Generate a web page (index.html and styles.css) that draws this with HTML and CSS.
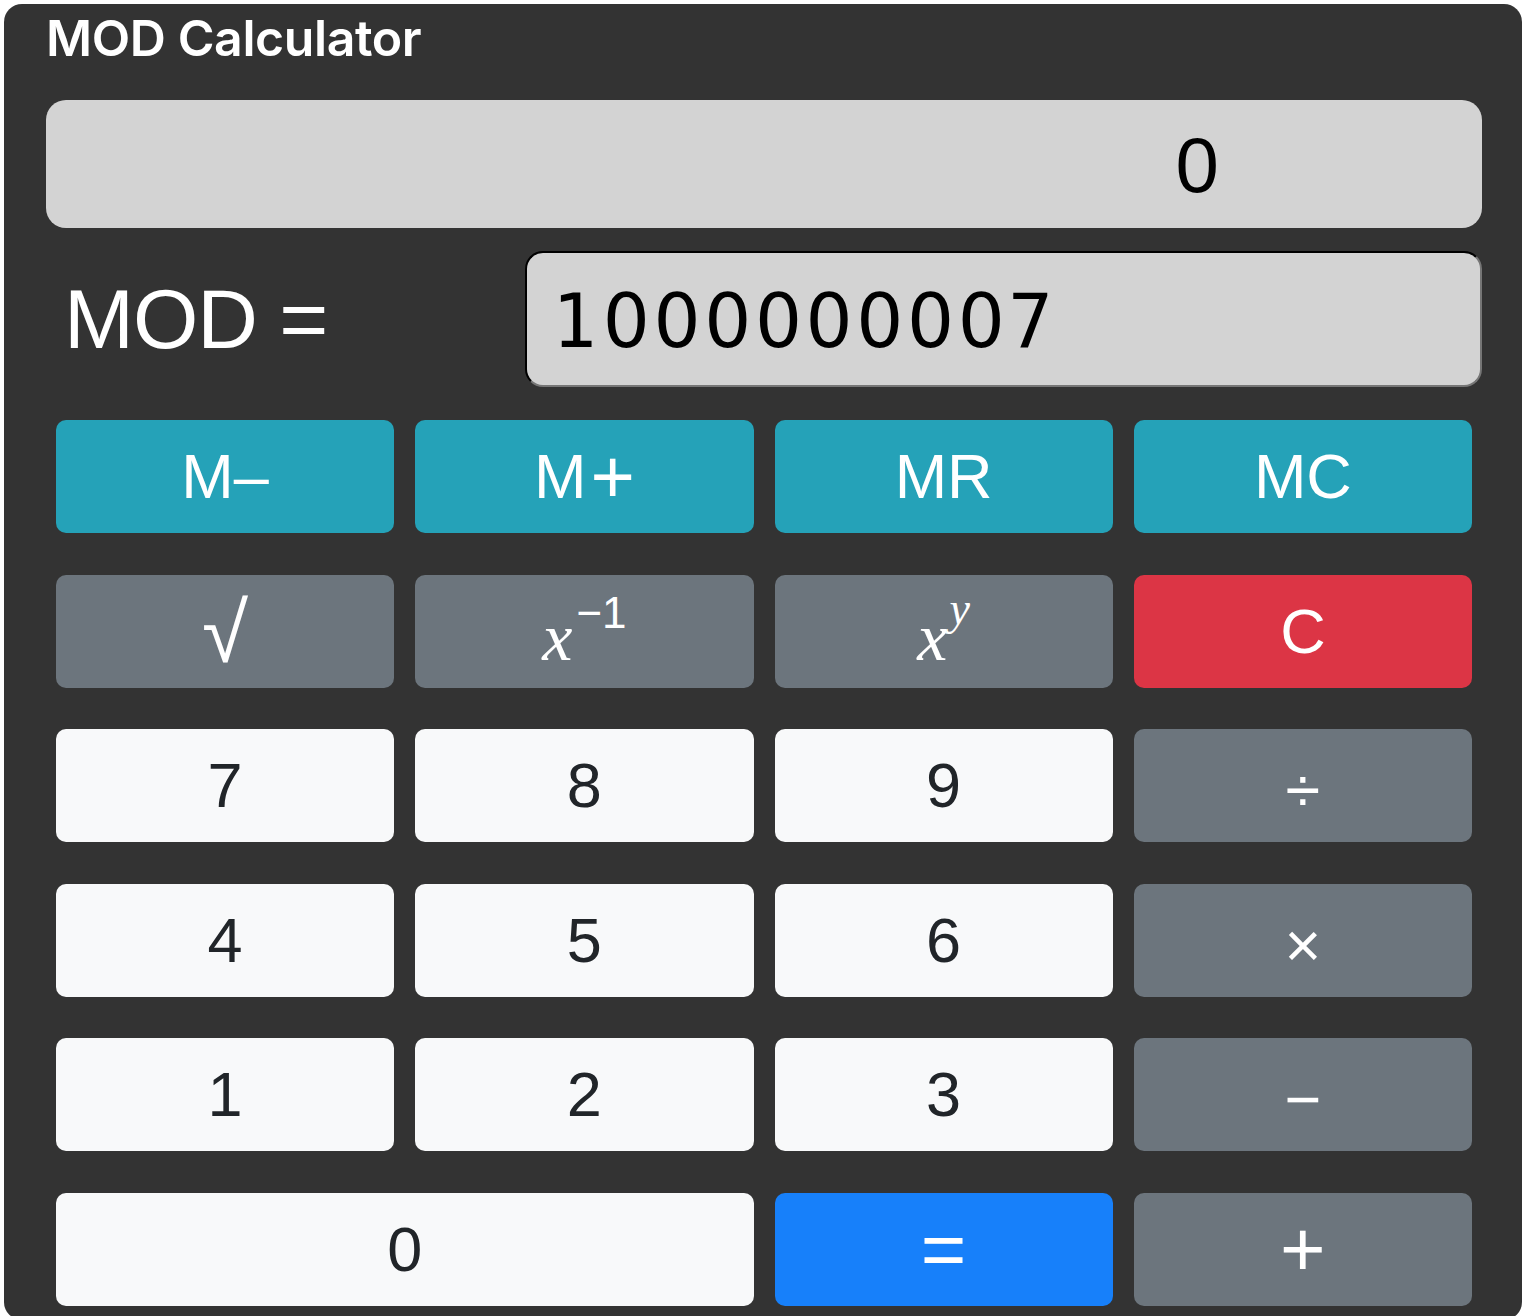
FILE: index.html
```html
<!DOCTYPE html>
<html lang="en">
<head>
<meta charset="utf-8">
<title>MOD Calculator</title>
<link rel="stylesheet" href="styles.css">
</head>
<body>
<div class="calc">
  <h1 class="title">MOD Calculator</h1>
  <div class="display">0</div>
  <div class="mod-row">
    <div class="mod-label">MOD =</div>
    <div class="mod-input">1<span class="zeros">00000000</span>7</div>
  </div>
  <div class="keys">
    <button class="key info">M&#8211;</button>
    <button class="key info">M<span class="bigplus">+</span></button>
    <button class="key info">MR</button>
    <button class="key info">MC</button>

    <button class="key sec"><span class="sqrt">&#8730;</span></button>
    <button class="key sec"><span class="mx">x</span><span class="sup">&#8722;1</span></button>
    <button class="key sec"><span class="mx">x</span><span class="sup mxs">y</span></button>
    <button class="key danger">C</button>

    <button class="key light">7</button>
    <button class="key light">8</button>
    <button class="key light">9</button>
    <button class="key sec"><span class="op">&#247;</span></button>

    <button class="key light">4</button>
    <button class="key light">5</button>
    <button class="key light">6</button>
    <button class="key sec"><span class="op">&#215;</span></button>

    <button class="key light">1</button>
    <button class="key light">2</button>
    <button class="key light">3</button>
    <button class="key sec"><span class="op">&#8722;</span></button>

    <button class="key light wide">0</button>
    <button class="key primary"><span class="eq">=</span></button>
    <button class="key sec plus">+</button>
  </div>
</div>
</body>
</html>
```

FILE: styles.css
```css
* {
  box-sizing: border-box;
}

html, body {
  margin: 0;
  padding: 0;
  background: #ffffff;
}

body {
  padding: 4px 0 0 4px;
  font-family: "Liberation Sans", Arial, sans-serif;
}

.calc {
  width: 1518px;
  height: 1316px;
  background: #333333;
  border-radius: 18px;
  padding: 0 40px 0 42px;
  display: flex;
  flex-direction: column;
}

.title {
  margin: 0;
  height: 96px;
  padding-top: 4px;
  font-family: Inter, "Liberation Sans", sans-serif;
  font-weight: 600;
  font-size: 50px;
  line-height: 60px;
  letter-spacing: -0.4px;
  color: #ffffff;
}

.display {
  height: 128px;
  background: #d3d3d3;
  border-radius: 20px;
  text-align: right;
  padding-right: 263px;
  font-size: 78px;
  line-height: 130px;
  color: #000000;
}

.mod-row {
  margin-top: 23px;
  height: 136px;
  display: flex;
  align-items: center;
}

.mod-label {
  width: 479px;
  padding-left: 18px;
  font-size: 84px;
  letter-spacing: -1px;
  color: #ffffff;
}

.mod-input {
  width: 957px;
  height: 136px;
  background: #d3d3d3;
  border: 2px inset #767676;
  border-top-color: #1e1e1e;
  border-left-color: #1e1e1e;
  border-radius: 18px;
  padding-left: 25px;
  padding-top: 4px;
  font-family: "DejaVu Sans Mono", monospace;
  font-size: 74px;
  letter-spacing: 6.3px;
  line-height: 128px;
  color: #000000;
  white-space: nowrap;
}

.zeros {
  font-family: "DejaVu Sans", sans-serif;
  letter-spacing: 3.6px;
}

.keys {
  margin: 33px 10px 0 10px;
  display: grid;
  grid-template-columns: repeat(4, 1fr);
  grid-auto-rows: 113px;
  column-gap: 21px;
  row-gap: 41.5px;
}

.key {
  border: none;
  border-radius: 10px;
  margin: 0;
  padding: 0;
  font-family: "Liberation Sans", Arial, sans-serif;
  font-size: 63px;
  line-height: 1;
  color: #ffffff;
  display: flex;
  align-items: center;
  justify-content: center;
}

.info {
  background: #25a2b8;
}

.sec {
  background: #6c757d;
}

.danger {
  background: #dc3545;
}

.light {
  background: #f8f9fa;
  color: #212529;
}

.primary {
  background: #1780fa;
}

.wide {
  grid-column: span 2;
}

.bigplus {
  font-size: 76px;
  margin-left: 4px;
}

.plus {
  font-size: 78px;
}

.op {
  position: relative;
  top: 5px;
}

.eq {
  font-size: 78px;
}

.sqrt {
  font-size: 84px;
  position: relative;
  top: 2px;
}

.mx {
  font-family: "Liberation Serif", "Times New Roman", serif;
  font-style: italic;
  font-size: 68px;
  position: relative;
  top: 6px;
}

.sup {
  font-size: 44px;
  position: relative;
  top: -18px;
  margin-left: 4px;
}

.mxs {
  font-family: "Liberation Serif", "Times New Roman", serif;
  font-style: italic;
  font-size: 46px;
  margin-left: 2px;
  top: -22px;
}
```
